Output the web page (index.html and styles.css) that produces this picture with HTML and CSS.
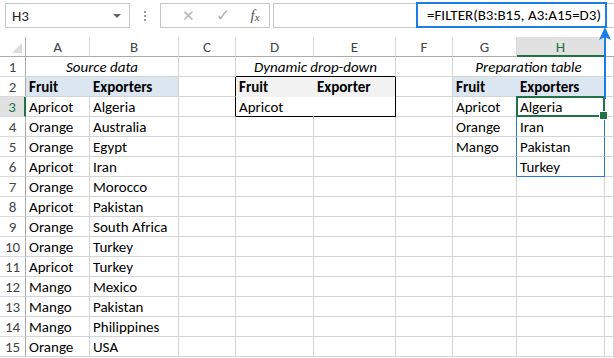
FILE: index.html
```html
<!DOCTYPE html>
<html>
<head>
<meta charset="utf-8">
<link rel="stylesheet" href="styles.css">
</head>
<body>
<div class="toolbar">
  <div class="namebox"><span>H3</span><span class="dd"></span></div>
  <div class="dots"><i></i><i></i><i></i></div>
  <div class="btns">
    <span class="btn x">✕</span>
    <span class="btn ok">✓</span>
    <span class="btn fx">f<sub>x</sub></span>
  </div>
  <div class="fbar"><span class="formula">=FILTER(B3:B15, A3:A15=D3)</span></div>
</div>
<div class="sheet">
  <div class="corner"><span class="tri"></span></div>
  <div class="ch">A</div><div class="ch">B</div><div class="ch">C</div><div class="ch">D</div><div class="ch">E</div><div class="ch">F</div><div class="ch">G</div><div class="ch sel">H</div><div class="ch last"></div>

  <div class="rh">1</div>
  <div class="c s2 it">Source data</div><div class="c"></div><div class="c s2 it bb">Dynamic drop-down</div><div class="c"></div><div class="c s2 it">Preparation table</div><div class="c"></div>

  <div class="rh">2</div>
  <div class="c blue b nr">Fruit</div><div class="c blue b">Exporters</div><div class="c br"></div><div class="c grey b nr nb">Fruit</div><div class="c grey b nb br">Exporter</div><div class="c"></div><div class="c blue b nr">Fruit</div><div class="c blue b bbl">Exporters</div><div class="c"></div>

  <div class="rh rsel">3</div>
  <div class="c">Apricot</div><div class="c">Algeria</div><div class="c br"></div><div class="c nr bb">Apricot</div><div class="c br bb"></div><div class="c"></div><div class="c brl">Apricot</div><div class="c brl hsel">Algeria</div><div class="c"></div>

  <div class="rh">4</div>
  <div class="c">Orange</div><div class="c">Australia</div><div class="c"></div><div class="c"></div><div class="c"></div><div class="c"></div><div class="c brl">Orange</div><div class="c brl">Iran</div><div class="c"></div>

  <div class="rh">5</div>
  <div class="c">Orange</div><div class="c">Egypt</div><div class="c"></div><div class="c"></div><div class="c"></div><div class="c"></div><div class="c brl">Mango</div><div class="c brl">Pakistan</div><div class="c"></div>

  <div class="rh">6</div>
  <div class="c">Apricot</div><div class="c">Iran</div><div class="c"></div><div class="c"></div><div class="c"></div><div class="c"></div><div class="c brl"></div><div class="c brl bbl">Turkey</div><div class="c"></div>

  <div class="rh">7</div>
  <div class="c">Orange</div><div class="c">Morocco</div><div class="c"></div><div class="c"></div><div class="c"></div><div class="c"></div><div class="c"></div><div class="c"></div><div class="c"></div>

  <div class="rh">8</div>
  <div class="c">Apricot</div><div class="c">Pakistan</div><div class="c"></div><div class="c"></div><div class="c"></div><div class="c"></div><div class="c"></div><div class="c"></div><div class="c"></div>

  <div class="rh">9</div>
  <div class="c">Orange</div><div class="c">South Africa</div><div class="c"></div><div class="c"></div><div class="c"></div><div class="c"></div><div class="c"></div><div class="c"></div><div class="c"></div>

  <div class="rh">10</div>
  <div class="c">Orange</div><div class="c">Turkey</div><div class="c"></div><div class="c"></div><div class="c"></div><div class="c"></div><div class="c"></div><div class="c"></div><div class="c"></div>

  <div class="rh">11</div>
  <div class="c">Apricot</div><div class="c">Turkey</div><div class="c"></div><div class="c"></div><div class="c"></div><div class="c"></div><div class="c"></div><div class="c"></div><div class="c"></div>

  <div class="rh">12</div>
  <div class="c">Mango</div><div class="c">Mexico</div><div class="c"></div><div class="c"></div><div class="c"></div><div class="c"></div><div class="c"></div><div class="c"></div><div class="c"></div>

  <div class="rh">13</div>
  <div class="c">Mango</div><div class="c">Pakistan</div><div class="c"></div><div class="c"></div><div class="c"></div><div class="c"></div><div class="c"></div><div class="c"></div><div class="c"></div>

  <div class="rh">14</div>
  <div class="c">Mango</div><div class="c">Philippines</div><div class="c"></div><div class="c"></div><div class="c"></div><div class="c"></div><div class="c"></div><div class="c"></div><div class="c"></div>

  <div class="rh">15</div>
  <div class="c">Orange</div><div class="c">USA</div><div class="c"></div><div class="c"></div><div class="c"></div><div class="c"></div><div class="c"></div><div class="c"></div><div class="c"></div>
</div>
<svg class="arrow" width="16" height="72" viewBox="0 0 16 72">
  <rect x="7" y="8" width="2" height="64" fill="#1a7ee6"/>
  <path d="M8 0 L14 13 L8 10 L2 13 Z" fill="#1a7ee6"/>
</svg>
</body>
</html>
```
FILE: styles.css
```css
* { box-sizing: border-box; }
html, body { margin: 0; padding: 0; background: #fff; }
body {
  width: 614px;
  height: 358px;
  overflow: hidden;
  position: relative;
  font-family: Carlito, Lato, "Liberation Sans", sans-serif;
  color: #000;
}
.toolbar {
  height: 37px;
  display: flex;
  align-items: flex-start;
  padding-top: 3px;
  padding-left: 5px;
}
.namebox {
  width: 125px;
  height: 25px;
  border: 1px solid #c6c6c6;
  display: flex;
  align-items: center;
  justify-content: space-between;
  padding: 0 8px 0 6px;
  font-size: 15px;
  color: #222;
}
.dd {
  width: 0; height: 0;
  border-left: 4px solid transparent;
  border-right: 4px solid transparent;
  border-top: 4px solid #666;
}
.dots {
  width: 30px;
  height: 25px;
  display: flex;
  flex-direction: column;
  align-items: center;
  justify-content: center;
  gap: 2px;
}
.dots i { display: block; width: 2px; height: 2px; background: #9a9a9a; }
.btns {
  width: 110px;
  height: 25px;
  border: 1px solid #c6c6c6;
  display: flex;
  align-items: center;
  padding-left: 14px;
}
.btn { display: inline-block; text-align: center; color: #b4b4b4; }
.btn.x { width: 26px; font-size: 15px; }
.btn.ok { width: 44px; font-size: 17px; }
.btn.fx { width: 20px; font-family: "Liberation Serif", serif; font-style: italic; font-size: 15px; color: #555; }
.btn.fx sub { font-size: 11px; vertical-align: -1px; }
.fbar {
  margin-left: 3px;
  flex: 1;
  height: 25px;
  border: 1px solid #c6c6c6;
  border-right: none;
  margin-right: -10px;
  position: relative;
}
.formula {
  position: absolute;
  left: 142px;
  top: -2px;
  width: 191px;
  height: 26px;
  border: 2px solid #1a7ee6;
  font-size: 15px;
  line-height: 22px;
  padding-left: 9px;
  white-space: nowrap;
}
.sheet {
  display: grid;
  grid-template-columns: 26px 64px 89px 57px 78px 82px 57px 64px 88px 1fr;
  grid-auto-rows: 20px;
  font-size: 15px;
}
.corner {
  border-right: 1px solid #ababab;
  border-bottom: 1px solid #ababab;
  position: relative;
}
.tri {
  position: absolute;
  right: 3px; bottom: 3px;
  width: 0; height: 0;
  border-left: 10px solid transparent;
  border-bottom: 10px solid #dcdcdc;
}
.ch {
  border-right: 1px solid #dadada;
  border-bottom: 1px solid #ababab;
  text-align: center;
  line-height: 19px;
  padding-top: 1px;
  color: #444;
}
.ch.sel {
  background: #e1e1e1;
  color: #217346;
  border-bottom: 2px solid #217346;
}
.ch.last { border-right: none; }
.rh {
  border-right: 1px solid #ababab;
  border-bottom: 1px solid #dadada;
  text-align: center;
  line-height: 19px;
  padding-top: 1px;
  color: #444;
}
.rh.rsel {
  background: #e1e1e1;
  color: #217346;
  border-right: 2px solid #217346;
}
.c {
  border-right: 1px solid #d4d4d4;
  border-bottom: 1px solid #d4d4d4;
  padding-left: 3px;
  padding-top: 1px;
  line-height: 19px;
  white-space: nowrap;
  overflow: visible;
  position: relative;
}
.s2 { grid-column: span 2; text-align: center; padding-left: 0; }
.it { font-style: italic; }
.b { font-weight: bold; }
.blue { background: #dce6f1; }
.grey { background: #f2f2f2; }
.nr { border-right-color: transparent; }
.blue.nr, .grey.nr { border-right: none; }
.nb { border-bottom: none; }
.br { border-right: 1px solid #000; }
.bb { border-bottom: 1px solid #000; }
.brl { border-right: 1px solid #2b78d8; }
.bbl { border-bottom: 1px solid #2b78d8; }
.hsel::after {
  content: "";
  position: absolute;
  top: -1px; left: -1px; right: -1px; bottom: -1px;
  border: 2px solid #217346;
}
.hsel::before {
  content: "";
  position: absolute;
  right: -4px; bottom: -4px;
  width: 7px; height: 7px;
  background: #217346;
  border: 1px solid #fff;
  z-index: 2;
}
.arrow {
  position: absolute;
  left: 597px;
  top: 27px;
}
```
